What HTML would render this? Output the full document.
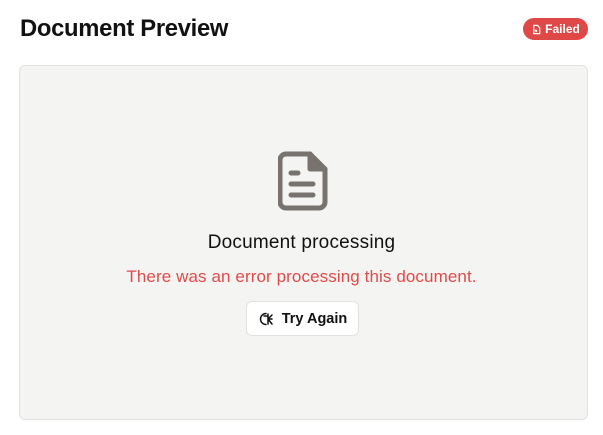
<!DOCTYPE html>
<html><head><style>
body{margin:0;width:603px;height:435px;background:#fff;font-family:"Liberation Sans",sans-serif;position:relative;overflow:hidden}
h1{position:absolute;left:20px;top:15px;margin:0;font-size:23.8px;font-weight:bold;color:#111;letter-spacing:-0.3px}
.badge{position:absolute;left:523px;top:18px;width:65px;height:22px;border-radius:11px;background:#e04848;color:#fff;font-size:12px;font-weight:bold;display:flex;align-items:center;justify-content:center;gap:3px}
.box{position:absolute;left:19px;top:65px;width:567px;height:353px;background:#f4f4f2;border:1px solid #e2e2e0;border-radius:6px}
.t1{position:absolute;left:0;width:100%;text-align:center;top:232px;font-size:19px;color:#111;letter-spacing:0.2px}
.t2{position:absolute;left:0;width:100%;text-align:center;top:267px;font-size:17px;color:#e24a4a;letter-spacing:0.1px}
.btn{position:absolute;left:246px;top:301px;width:113px;height:35px;background:#fff;border:1px solid #e2e2e0;border-radius:6px;box-sizing:border-box;display:flex;align-items:center;justify-content:center;gap:8px;font-size:14.5px;font-weight:bold;color:#111}
</style></head><body>
<h1>Document Preview</h1>
<div class="badge"><svg width="11" height="11" viewBox="0 0 12 12" fill="none" stroke="#fff" stroke-width="1.3"><path d="M3 1.5h4l2.5 2.5v6.5H3z"/><path d="M4.5 6.5l2 2M6.5 6.5l-2 2"/></svg>Failed</div>
<div class="box"></div>
<svg style="position:absolute;left:278px;top:151px" width="50" height="60" viewBox="0 0 50 60" fill="none" stroke="#78736e" stroke-width="5" stroke-linejoin="round" stroke-linecap="round"><path d="M8 3h24l15 15v33a6 6 0 0 1-6 6H8a6 6 0 0 1-6-6V9a6 6 0 0 1 6-6z"/><path d="M32 3v15h15" fill="#78736e"/><path d="M13 22h7M13 33h22M13 44h22"/></svg>
<div class="t1">Document processing</div>
<div class="t2">There was an error processing this document.</div>
<div class="btn"><svg width="16" height="16" viewBox="0 0 16 16" fill="none" stroke="#111" stroke-width="1.5" stroke-linecap="round"><path d="M8 2.5a5.5 5.5 0 1 0 0 11"/><path d="M6 5h4M10 3v10M10 8h4M10 8l4-4M10 8l4 5"/></svg>Try Again</div>
</body></html>
